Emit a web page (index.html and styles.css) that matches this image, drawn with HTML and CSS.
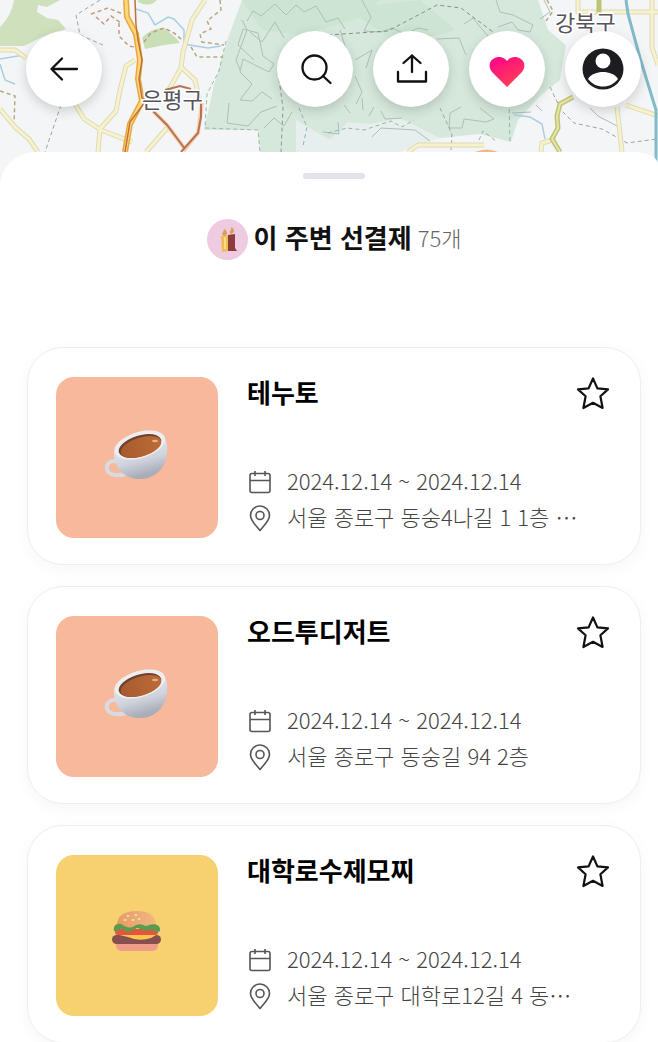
FILE: index.html
```
<!DOCTYPE html>
<html lang="ko">

<head>
    <meta charset="UTF-8">
    <meta name="viewport" content="width=device-width, initial-scale=1.0">
    <title>이 주변 선결제</title>
    <link rel="stylesheet" href="styles.css">
</head>

<body>
    <!-- Shared icons -->
    <svg class="icon-defs" aria-hidden="true">
        <symbol id="icon-star" viewBox="0 0 34 34">
            <path d="M17 1.5 L21.4 11.4 L32 12.4 L24.4 19.2 L26.6 31 L17 25.8 L7.4 31 L9.6 19.2 L2 12.4 L12.6 11.4 Z" fill="none" stroke="#111" stroke-width="2.2" stroke-linejoin="round" />
        </symbol>
        <symbol id="icon-calendar" viewBox="0 -4 26 32">
            <path d="M5 5.5 H21 Q23 5.5 23 7.5 V22.5 Q23 24.5 21 24.5 H5 Q3 24.5 3 22.5 V7.5 Q3 5.5 5 5.5 Z M3 12.5 H23 M8 3 V8 M18 3 V8" fill="none" stroke="#555" stroke-width="1.6" />
        </symbol>
        <symbol id="icon-pin" viewBox="0 -4 26 32">
            <path d="M13 26.5 C10 22.5 3.5 17 3.5 11.5 A9.5 9.5 0 0 1 22.5 11.5 C22.5 17 16 22.5 13 26.5 Z" fill="none" stroke="#555" stroke-width="1.6" stroke-linejoin="round" />
            <circle cx="13" cy="11.5" r="4" fill="none" stroke="#555" stroke-width="1.6" />
        </symbol>
        <symbol id="pic-coffee" viewBox="0 0 66 52">
            <path d="M14 32 C7 29 2 34 3 39 C4 46 14 46 23 44" fill="none" stroke="#d9dbe2" stroke-width="4" stroke-linecap="round" />
            <path d="M10 20 C9 34 17 48 34 49 C52 50 65 36 63 15 C62 6 56 1 45 1 C28 2 12 10 10 20 Z" fill="url(#cup)" />
            <ellipse cx="36" cy="15" rx="26" ry="13" transform="rotate(-17 36 15)" fill="#eeeef1" />
            <ellipse cx="36" cy="16" rx="22" ry="10.5" transform="rotate(-17 36 16)" fill="#70402c" />
            <ellipse cx="37" cy="17" rx="21" ry="9.5" transform="rotate(-17 37 17)" fill="url(#coffee)" />
            <ellipse cx="51" cy="11" rx="3" ry="1.2" fill="#e7b08c" />
        </symbol>
        <symbol id="pic-burger" viewBox="0 0 50 42">
            <path d="M4 31 H46 V35 Q46 41 39 41 H11 Q4 41 4 35 Z" fill="#ef9c88" />
            <rect x="0" y="25" width="49" height="9" rx="4.5" fill="#87504f" />
            <path d="M3 24 H46 L39 28 Q27 32 16 27 Z" fill="#ffc54e" />
            <rect x="3" y="19" width="43" height="6" rx="3" fill="#e4553f" />
            <path d="M5 15 C5 6 12 1 25 1 C38 1 44 7 44 15 L43 18 H6 Z" fill="url(#bun)" />
            <path d="M2 21 C1 15 5 13 9 14 C15 18 18 19 24 15 C30 12 33 18 37 15 C44 13 49 16 48 21 C44 24 41 19 36 20 C31 23 29 18 25 18 C20 21 15 24 10 19 C7 18 5 23 2 21 Z" fill="#5b9b4e" />
            <g fill="#f9dcae">
                <ellipse cx="16" cy="6" rx="1.5" ry="1" />
                <ellipse cx="24" cy="5" rx="1.5" ry="1" />
                <ellipse cx="13" cy="10" rx="1.5" ry="1" />
                <ellipse cx="21" cy="10" rx="1.5" ry="1" />
                <ellipse cx="27" cy="9" rx="1.5" ry="1" />
            </g>
        </symbol>
        <defs>
            <linearGradient id="cup" x1="0" y1="0" x2="0.3" y2="1">
                <stop offset="0.3" stop-color="#e6e8ee" />
                <stop offset="0.7" stop-color="#cfd3dc" />
                <stop offset="1" stop-color="#a9adb8" />
            </linearGradient>
            <linearGradient id="coffee">
                <stop offset="0" stop-color="#a65a2d" />
                <stop offset="1" stop-color="#bd6c38" />
            </linearGradient>
            <linearGradient id="bun" x1="0" x2="1">
                <stop offset="0" stop-color="#e79b66" />
                <stop offset="1" stop-color="#f0b880" />
            </linearGradient>
            <linearGradient id="heart" x1="0" y1="0" x2="0.6" y2="1">
                <stop offset="0" stop-color="#ff008c" />
                <stop offset="1" stop-color="#ff4054" />
            </linearGradient>
        </defs>
    </svg>

    <!-- Map with floating buttons -->
    <header class="map-header">
        <svg class="map" viewBox="0 0 658 200" preserveAspectRatio="xMidYMin slice" role="img" aria-label="지도">
            <rect width="658" height="200" fill="#f4f5f7" />
            <!-- parks and mountains -->
            <path d="M14 0 H60 L47 7 L38 5 L37 12 L47 18 L58 20 L66 29 L40 38 L24 46 L0 46 V27 Q12 15 14 0 Z" fill="#cfe0bd" />
            <path d="M142 38 Q150 28 164 28 L176 38 L180 43 L164 45 L145 49 Z" fill="#c9dfb6" />
            <path d="M138 0 H157 Q150 8 138 2 Z" fill="#c9dfb6" />
            <path d="M242 0 H538 L548 30 L566 45 L560 80 L540 96 L518 120 L511 142 L480 134 L430 139 L419 130 L380 126 L330 140 L300 128 L296 152 H260 L258 130 H204 L214 85 L227 41 Z" fill="#d6e8dc" />
            <path d="M242 0 H380 L360 18 L300 35 L262 30 Z M345 8 L420 0 L456 30 L400 45 Z" fill="#cde4d3" />
            <path d="M296 120 L330 140 L348 122 L370 124 L400 118 L440 138 L400 152 H296 Z" fill="#e6efee" />
            <!-- contour lines -->
            <g fill="none" stroke="#aebfb5" stroke-width="1">
                <path d="M254 60 L238 45 L243 29 L258 33 L263 56 L274 64 L269 72 L243 59 L240 72 L252 84 L240 100 L252 101 L262 92 L272 99 M229 103 L227 123 L248 126 L261 112 L277 106" />
                <path d="M242 20 L247 30 L236 60 L240 70 M250 32 L262 42 L275 22 L284 38 M247 21 L253 11 L261 16 L275 4 L286 15 L296 5 L304 12 L316 6 L326 22 L338 18 L345 29" />
                <path d="M340 30 L347 52 L338 60 M355 60 L372 50 L366 68 M355 76 L362 92 L356 104 M264 128 L274 118 L284 126 L292 112" />
                <path d="M390 49 L377 54 L384 69 M437 39 L459 38 L466 55 M498 27 L512 22 L518 30 L530 32 L533 25 L513 15 L500 12 L496 0" />
                <path d="M362 0 L371 17 L364 31 L381 32 L392 28 L405 34 L418 28 L428 30 M464 24 L473 18 L481 28 L488 36" />
                <path d="M350 113 L344 105 M363 110 L362 98 M369 116 L374 107 M381 111 L385 119 L402 118 M461 107 L450 113 L449 128 L462 128 L464 119 L486 122 L494 119 L480 108 M323 132 L339 134 L338 122 M372 137 L381 128 L415 130 L430 141" />
                <path d="M544 0 L550 12 L540 19 M512 113 L531 112 M536 105 L542 111 M590 108 L598 116 L617 126" />
            </g>
            <!-- trails -->
            <g fill="none" stroke-dasharray="4 3" stroke-width="1">
                <path d="M226 41 L219 71 L207 94 L205 128 L258 130 L260 152" stroke="#95bda6" />
                <path d="M100 0 L76 15 L80 35 L103 45 M61 105 L45 152" stroke="#a1a1a6" />
                <path d="M328 35 L388 31 L437 5 L461 8 L493 32" stroke="#839289" />
                <path d="M278 72 L283 108 L281 152" stroke="#91939b" />
                <path d="M440 108 L452 134 L451 150 M550 87 L561 110 L574 123 L602 129 L627 143 L657 139" stroke="#9ba3a2" />
                <path d="M299 108 L307 127 L303 146 M328 133 L347 128 L364 130 L391 121 L402 127 L414 120 M479 140 L483 131 L497 142 M509 102 L510 142" stroke="#95b6a5" />
                <path d="M91 14 L108 8 L123 14 M96 17 L104 24 L111 16 L121 23 M119 23 L119 36 L129 46 L140 48 M144 42 L151 33 L164 28 L174 33 L182 40" stroke="#c29a7f" stroke-width="1.5" />
                <path d="M220 0 L221 10 L207 21 L211 29 L200 34 L202 42 L224 45 M191 47 L197 57 L223 57 M0 91 L15 96 L14 124 M547 0 L553 11 L546 21" stroke="#b5aa80" stroke-width="1.5" />
            </g>
            <!-- streams -->
            <g fill="none" stroke="#aacfe2" stroke-width="1.5">
                <path d="M136 9 L148 13 L155 25 L168 17 L174 19 L184 30 L184 44 L208 48 L221 46" />
                <path d="M0 59 L24 55 M514 115 L530 117 L542 124 L545 139 M0 64 L5 80 L15 84" />
            </g>
            <!-- yellow roads, casing first -->
            <g fill="none" stroke="#dcdab9" stroke-width="5" stroke-linejoin="round">
                <path d="M205 0 L192 20 L183 52 L181 68 L167 93 M181 67 L195 80 L200 101 M135 60 L126 66 L120 90 L116 111 L100 129 L98 152 M75 104 L84 119 L101 130 L132 142 M0 50 H15 L26 58 M0 109 L15 127 L29 139 L38 152 M167 128 L146 152" />
                <path d="M408 152 L418 145 L484 145 M578 0 V12 H658 M652 0 V48 L658 65 M590 10 L586 30 M617 107 L622 152 M626 105 L658 116 M556 139 L542 143 L541 152" />
            </g>
            <g fill="none" stroke="#f7f2cb" stroke-width="3" stroke-linejoin="round">
                <path d="M205 0 L192 20 L183 52 L181 68 L167 93 M181 67 L195 80 L200 101 M135 60 L126 66 L120 90 L116 111 L100 129 L98 152 M75 104 L84 119 L101 130 L132 142 M0 50 H15 L26 58 M0 109 L15 127 L29 139 L38 152 M167 128 L146 152" />
                <path d="M408 152 L418 145 L484 145 M578 0 V12 H658 M652 0 V48 L658 65 M590 10 L586 30 M617 107 L622 152 M626 105 L658 116 M556 139 L542 143 L541 152" />
            </g>
            <!-- main roads -->
            <path d="M126 0 L127 17 L136 34 L140 60 L138 79 L142 101 M142 101 L130 124 L125 152" fill="none" stroke="#e8a83f" stroke-width="6" />
            <path d="M126 0 L127 17 L136 34 L140 60 L138 79 L142 101 M142 101 L130 124 L125 152" fill="none" stroke="#ffd777" stroke-width="3" />
            <path d="M135 0 L136 25 L138 40 L142 60 L139 79 L142 98 L145 102 L130 122 L125 152" fill="none" stroke="#bd713e" stroke-width="1.5" />
            <path d="M153 111 L167 125 L185 149 L198 133 L202 103" fill="none" stroke="#f7cfae" stroke-width="4" />
            <path d="M153 111 L167 125 L185 149 M181 152 L198 133 L201 117 V104 M165 90 L180 86 L191 89" fill="none" stroke="#b77452" stroke-width="2" />
            <path d="M573 97 L560 104 L557 116 L558 128 L552 139 L560 152 M599 0 V14" fill="none" stroke="#bec378" stroke-width="5" />
            <path d="M573 97 L560 104 L557 116 L558 128 L552 139 L560 152" fill="none" stroke="#e6e6a5" stroke-width="2" />
            <path d="M626 0 L628 14 L640 58 L656 110 V166" fill="none" stroke="#83bac7" stroke-width="3" />
            <path d="M475 152 Q487 147 498 152 Z" fill="#efb78c" />
            <!-- district names -->
            <g class="map-label">
                <text x="142" y="108">은평구</text>
                <text x="555" y="31">강북구</text>
            </g>
        </svg>

        <nav class="map-buttons">
            <button class="round-button back-button" aria-label="뒤로">
                <svg width="36" height="36" viewBox="0 0 36 36" fill="none" stroke="#111" stroke-width="2.3" stroke-linecap="round" stroke-linejoin="round">
                    <path d="M31 18 H5.5 M16 7.5 L5.5 18 L16 28.5" />
                </svg>
            </button>
            <button class="round-button" aria-label="검색">
                <svg width="36" height="36" viewBox="0 0 36 36" fill="none" stroke="#111" stroke-width="2.3" stroke-linecap="round">
                    <circle cx="17.500" cy="16.5" r="12" />
                    <path d="M26 25 L33.500 32" />
                </svg>
            </button>
            <button class="round-button" aria-label="공유">
                <svg width="36" height="36" viewBox="0 0 36 36" fill="none" stroke="#111" stroke-width="2.3" stroke-linecap="round" stroke-linejoin="round">
                    <path d="M5 21 V30.5 H33 V21 M19 21 V4.5 M10.5 12 L19 4.5 L27.5 12" />
                </svg>
            </button>
            <button class="round-button" aria-label="찜">
                <svg width="36" height="36" viewBox="0 0 36 36">
                    <path d="M18 36 L4 22 C1 19 0 15 1 12 C3 6 13 3 18 10 C23 3 33 6 35 12 C36 15 35 19 32 22 Z" fill="url(#heart)" />
                </svg>
            </button>
            <button class="round-button" aria-label="내 정보">
                <svg width="42" height="42" viewBox="0 0 42 42">
                    <circle cx="21" cy="21" r="20.5" fill="#1d1c21" />
                    <circle cx="21" cy="13" r="7.5" fill="#fff" />
                    <path d="M6 31 C9 26 15 24 21 24 C27 24 33 26 36 31 C32 36 27 38.5 21 38.5 C15 38.5 10 36 6 31 Z" fill="#fff" />
                </svg>
            </button>
        </nav>
    </header>

    <!-- Bottom sheet -->
    <main class="sheet">
        <div class="sheet-handle"></div>

        <div class="sheet-title">
            <svg class="candle-badge" viewBox="0 0 41 41" aria-hidden="true">
                <circle cx="20.5" cy="20.5" r="20.5" fill="#efcbe1" />
                <path d="M14 17 L21 16 L22 32 L15 33 Z" fill="#efbc57" />
                <path d="M21 16 L28 15 L28 29 L30 32 L21 32 Z" fill="#8b3d3b" />
                <path d="M17 17 C13 14 17 14 17 10 C22 13 20 16 17 17 Z M24 15 C21 12 25 12 24 8 C29 11 27 14 24 15 Z" fill="#dc9c55" />
                <path d="M18 18 V30" stroke="#f8dd7c" stroke-width="2" />
            </svg>
            <h1>이 주변 선결제</h1>
            <span class="count">75개</span>
        </div>

        <div class="store-list">
            <article class="store-card">
                <div class="thumb coffee">
                    <svg width="66" height="52"><use href="#pic-coffee" /></svg>
                </div>
                <div class="store-info">
                    <div class="store-top">
                        <h2>테누토</h2>
                        <button class="star-button" aria-label="즐겨찾기"><svg width="34" height="34"><use href="#icon-star" /></svg></button>
                    </div>
                    <div class="store-details">
                        <p><svg width="26" height="32"><use href="#icon-calendar" /></svg>2024.12.14 ~ 2024.12.14</p>
                        <p><svg width="26" height="32"><use href="#icon-pin" /></svg>서울 종로구 동숭4나길 1 1층 ⋯</p>
                    </div>
                </div>
            </article>

            <article class="store-card">
                <div class="thumb coffee">
                    <svg width="66" height="52"><use href="#pic-coffee" /></svg>
                </div>
                <div class="store-info">
                    <div class="store-top">
                        <h2>오드투디저트</h2>
                        <button class="star-button" aria-label="즐겨찾기"><svg width="34" height="34"><use href="#icon-star" /></svg></button>
                    </div>
                    <div class="store-details">
                        <p><svg width="26" height="32"><use href="#icon-calendar" /></svg>2024.12.14 ~ 2024.12.14</p>
                        <p><svg width="26" height="32"><use href="#icon-pin" /></svg>서울 종로구 동숭길 94 2층</p>
                    </div>
                </div>
            </article>

            <article class="store-card">
                <div class="thumb burger">
                    <svg width="50" height="42"><use href="#pic-burger" /></svg>
                </div>
                <div class="store-info">
                    <div class="store-top">
                        <h2>대학로수제모찌</h2>
                        <button class="star-button" aria-label="즐겨찾기"><svg width="34" height="34"><use href="#icon-star" /></svg></button>
                    </div>
                    <div class="store-details">
                        <p><svg width="26" height="32"><use href="#icon-calendar" /></svg>2024.12.14 ~ 2024.12.14</p>
                        <p><svg width="26" height="32"><use href="#icon-pin" /></svg>서울 종로구 대학로12길 4 동⋯</p>
                    </div>
                </div>
            </article>
        </div>
    </main>
</body>

</html>
```
FILE: styles.css
```
* {
    box-sizing: border-box;
}

body {
    margin: 0;
    background-color: white;
    font-family: "Noto Sans CJK KR", sans-serif;
    color: #111;
}

h1, h2, p {
    margin: 0;
}

button {
    border: none;
    padding: 0;
    cursor: pointer;
}

svg {
    display: block;
    flex-shrink: 0;
}

.icon-defs {
    position: absolute;
    width: 0;
    height: 0;
}

.map-header {
    position: relative;
    height: 152px;
}

/* the map runs on under the sheet's rounded corners */
.map {
    position: absolute;
    top: 0;
    left: 0;
    width: 100%;
    height: 200px;
}

.map-label {
    font-size: 22px;
    fill: #55555a;
    stroke: white;
    stroke-width: 3px;
    paint-order: stroke;
}

.map-buttons {
    position: relative;
    display: flex;
    gap: 20px;
    padding: 31px 17px 0 26px;
}

.round-button {
    display: flex;
    justify-content: center;
    align-items: center;
    width: 76px;
    height: 76px;
    border-radius: 50%;
    background-color: white;
    box-shadow: 0 4px 12px rgba(0, 0, 0, 0.16);
}

.back-button {
    margin-right: auto;
}

.sheet {
    position: relative;
    background-color: white;
    border-radius: 36px 24px 0 0 / 34px 12px 0 0;
    padding: 21px 17px 0 27px;
}

.sheet-handle {
    width: 62px;
    height: 6px;
    margin: 0 auto;
    border-radius: 3px;
    background-color: #e3e3e9;
}

.sheet-title {
    display: flex;
    justify-content: center;
    gap: 6px;
    margin-top: 40px;
    height: 41px;
}

.sheet-title h1 {
    font-size: 26px;
    line-height: 36px;
    font-weight: bold;
}

.candle-badge {
    width: 41px;
    height: 41px;
}

.count {
    font-size: 22px;
    line-height: 36px;
    font-weight: 300;
    color: #666;
}

.store-list {
    display: flex;
    flex-direction: column;
    gap: 21px;
    margin-top: 87px;
}

.store-card {
    display: flex;
    gap: 29px;
    padding: 29px 30px 26px 28px;
    border: 1px solid #eee;
    border-radius: 36px;
    background-color: white;
    box-shadow: 0 4px 16px rgba(0, 0, 0, 0.04);
}

.thumb {
    display: flex;
    justify-content: center;
    align-items: center;
    flex-shrink: 0;
    width: 162px;
    height: 161px;
    border-radius: 18px;
}

.coffee {
    padding-bottom: 4px;
    background-color: #f8b89c;
}

.burger {
    padding-bottom: 10px;
    background-color: #f7d06f;
}

.store-info {
    display: flex;
    flex-direction: column;
    justify-content: space-between;
    flex: 1;
    min-width: 0;
}

.store-top {
    display: flex;
    justify-content: space-between;
    align-items: flex-start;
}

.store-top h2 {
    font-size: 26px;
    line-height: 30px;
    font-weight: bold;
    color: black;
}

.star-button {
    background: none;
}

.store-details {
    padding-bottom: 4px;
}

.store-details p {
    display: flex;
    align-items: center;
    gap: 14px;
    font-size: 22px;
    line-height: 36px;
    font-weight: 300;
    color: #444;
    white-space: nowrap;
}
```
